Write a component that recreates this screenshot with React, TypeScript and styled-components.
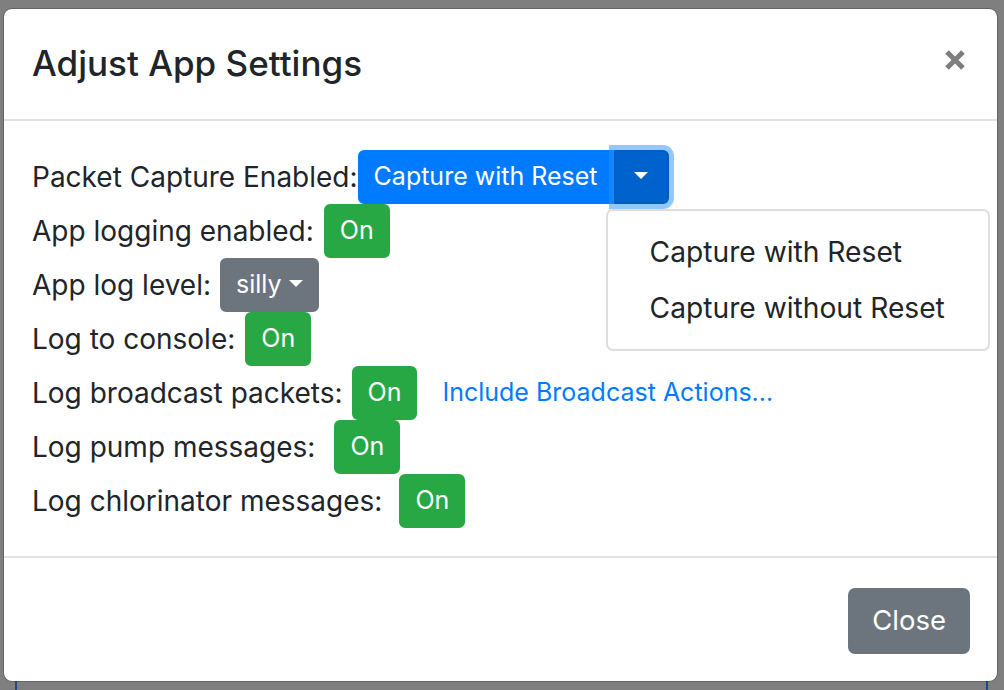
import React from "react";
import styled, { createGlobalStyle, css } from "styled-components";

const GlobalStyle = createGlobalStyle`
  html, body { margin: 0; padding: 0; }
  body {
    background: #7f7f7f;
    font-family: Inter, "Noto Sans", "Liberation Sans", sans-serif;
    color: #212529;
  }
  *, *::before, *::after { box-sizing: border-box; }
`;

const Screen = styled.div`
  position: relative;
  width: 1004px;
  height: 690px;
  overflow: hidden;
  padding: 8px 0 0 3px;
  &::before {
    content: "";
    position: absolute;
    left: 15px;
    right: 16px;
    top: 560px;
    bottom: 0;
    border-left: 2px solid #1c4a8c;
    border-right: 2px solid #1c4a8c;
  }
`;

const Modal = styled.div`
  position: relative;
  z-index: 1;
  width: 995px;
  height: 674px;
  background: #fff;
  background-clip: padding-box;
  border: 1px solid rgba(0, 0, 0, 0.2);
  border-radius: 9px;
  display: flex;
  flex-direction: column;
`;

const Header = styled.header`
  flex: none;
  height: 112px;
  display: flex;
  align-items: center;
  justify-content: space-between;
  padding: 0 28px 2px;
  border-bottom: 2px solid #dee2e6;
`;

const Title = styled.h5`
  margin: 0;
  font-size: 35px;
  font-weight: 500;
  line-height: 1.2;
`;

const XButton = styled.button`
  background: none;
  border: 0;
  padding: 0;
  margin: -6px 3px 0 0;
  width: 22px;
  height: 22px;
  color: #000;
  opacity: 0.5;
  display: flex;
  cursor: pointer;
`;

const Body = styled.div`
  flex: none;
  height: 435px;
  padding: 29px 28px 28px;
`;

const Row = styled.div<{ $gap: number }>`
  position: relative;
  display: flex;
  align-items: center;
  height: 54px;
  gap: ${(p) => p.$gap}px;
  font-size: 28px;
`;

const Label = styled.span`
  line-height: 1.5;
  white-space: nowrap;
`;

type Variant = "primary" | "primaryActive" | "success" | "secondary" | "link";

const variants: Record<Variant, ReturnType<typeof css>> = {
  primary: css`
    background: #007bff;
    border-color: #007bff;
    color: #fff;
  `,
  primaryActive: css`
    background: #0062cc;
    border-color: #005cbf;
    color: #fff;
  `,
  success: css`
    background: #28a745;
    border-color: #28a745;
    color: #fff;
  `,
  secondary: css`
    background: #6c757d;
    border-color: #6c757d;
    color: #fff;
  `,
  link: css`
    background: transparent;
    border-color: transparent;
    color: #007bff;
  `,
};

const SmallButton = styled.button<{ $variant: Variant }>`
  display: inline-flex;
  align-items: center;
  height: 54px;
  padding: 0 14px;
  font-family: inherit;
  font-size: 25px;
  line-height: 1.5;
  border: 2px solid transparent;
  border-radius: 6px;
  white-space: nowrap;
  cursor: pointer;
  ${(p) => variants[p.$variant]}
`;

const SplitGroup = styled.div`
  position: relative;
  display: inline-flex;
`;

const SplitMain = styled(SmallButton)`
  border-radius: 6px 0 0 6px;
`;

const SplitToggle = styled(SmallButton)`
  position: relative;
  z-index: 1;
  width: 55px;
  justify-content: center;
  padding: 0;
  border-radius: 0 6px 6px 0;
  box-shadow: 0 0 0 5px rgba(38, 143, 255, 0.5);
`;

const Caret = styled.span<{ $ml: number }>`
  display: inline-block;
  width: 0;
  height: 0;
  margin-left: ${(p) => p.$ml}px;
  margin-top: -3px;
  border-top: 7px solid currentColor;
  border-left: 7px solid transparent;
  border-right: 7px solid transparent;
`;

const Menu = styled.div`
  position: absolute;
  left: 248px;
  top: 59px;
  z-index: 1000;
  background: #fff;
  border: 2px solid rgba(0, 0, 0, 0.13);
  border-radius: 7px;
  padding: 13px 0;
  font-size: 28.2px;
  white-space: nowrap;
`;

const MenuItem = styled.a`
  display: block;
  padding: 7px 43px 7px 42px;
  line-height: 42px;
  color: #212529;
  text-decoration: none;
`;

const Footer = styled.footer`
  flex: 1;
  display: flex;
  justify-content: flex-end;
  align-items: flex-start;
  border-top: 2px solid #dee2e6;
  padding: 30px 27px 0;
`;

const CloseButton = styled.button`
  height: 66px;
  padding: 0 22px;
  font-family: inherit;
  font-size: 27.5px;
  line-height: 1.5;
  color: #fff;
  background: #6c757d;
  border: 2px solid #6c757d;
  border-radius: 7px;
  cursor: pointer;
`;

const rows: { label: string; gap: number; link?: string }[] = [
  { label: "App logging enabled:", gap: 10 },
  { label: "App log level:", gap: 9 },
  { label: "Log to console:", gap: 10 },
  { label: "Log broadcast packets:", gap: 9, link: "Include Broadcast Actions..." },
  { label: "Log pump messages:", gap: 19 },
  { label: "Log chlorinator messages:", gap: 17 },
];

export default function App() {
  return (
    <>
      <GlobalStyle />
      <Screen>
        <Modal role="dialog" aria-label="Adjust App Settings">
          <Header>
            <Title>Adjust App Settings</Title>
            <XButton aria-label="Close">
              <svg width="22" height="22" viewBox="0 0 22 22">
                <path d="M3 3 L19 19 M19 3 L3 19" stroke="currentColor" strokeWidth="5" fill="none" />
              </svg>
            </XButton>
          </Header>
          <Body>
            <Row $gap={0}>
              <Label>Packet Capture Enabled:</Label>
              <SplitGroup>
                <SplitMain $variant="primary">Capture with Reset</SplitMain>
                <SplitToggle $variant="primaryActive" aria-label="Toggle dropdown">
                  <Caret $ml={0} />
                </SplitToggle>
                <Menu>
                  <MenuItem href="#">Capture with Reset</MenuItem>
                  <MenuItem href="#">Capture without Reset</MenuItem>
                </Menu>
              </SplitGroup>
            </Row>
            {rows.map((r, i) => (
              <Row key={r.label} $gap={r.gap}>
                <Label>{r.label}</Label>
                {i === 1 ? (
                  <SmallButton $variant="secondary">
                    silly
                    <Caret $ml={7} />
                  </SmallButton>
                ) : (
                  <SmallButton $variant="success">On</SmallButton>
                )}
                {r.link && <SmallButton $variant="link">{r.link}</SmallButton>}
              </Row>
            ))}
          </Body>
          <Footer>
            <CloseButton>Close</CloseButton>
          </Footer>
        </Modal>
      </Screen>
    </>
  );
}
